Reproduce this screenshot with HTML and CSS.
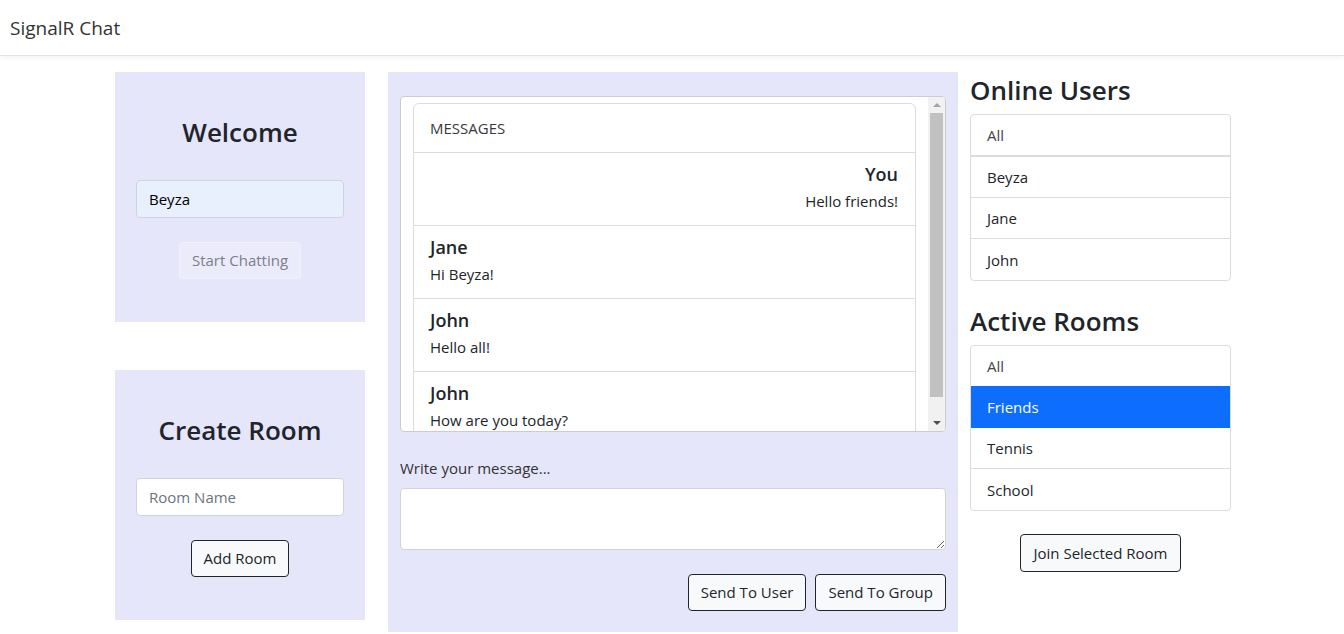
FILE: index.html
```html
<!DOCTYPE html>
<html lang="en">
<head>
<meta charset="utf-8">
<title>SignalR Chat</title>
<link rel="stylesheet" href="styles.css">
</head>
<body>
<nav class="navbar"><span class="brand">SignalR Chat</span></nav>
<main class="layout">
  <div class="left-col">
    <section class="panel">
      <h3 class="panel-title">Welcome</h3>
      <input class="field field-filled" type="text" value="Beyza">
      <button class="btn btn-disabled" disabled>Start Chatting</button>
    </section>
    <section class="panel">
      <h3 class="panel-title">Create Room</h3>
      <input class="field" type="text" placeholder="Room Name">
      <button class="btn">Add Room</button>
    </section>
  </div>

  <section class="chat">
    <div class="scroll-box">
      <div class="scroll-content">
        <div class="card">
          <div class="card-header">MESSAGES</div>
          <div class="msg msg-own">
            <div class="msg-name">You</div>
            <div class="msg-text">Hello friends!</div>
          </div>
          <div class="msg">
            <div class="msg-name">Jane</div>
            <div class="msg-text">Hi Beyza!</div>
          </div>
          <div class="msg">
            <div class="msg-name">John</div>
            <div class="msg-text">Hello all!</div>
          </div>
          <div class="msg">
            <div class="msg-name">John</div>
            <div class="msg-text">How are you today?</div>
          </div>
        </div>
      </div>
      <div class="scrollbar" aria-hidden="true">
        <div class="sb-arrow"><span class="tri-up"></span></div>
        <div class="sb-thumb"></div>
        <div class="sb-rest"></div>
        <div class="sb-arrow"><span class="tri-down"></span></div>
      </div>
    </div>
    <label class="write-label">Write your message...</label>
    <textarea class="message-input"></textarea>
    <div class="actions">
      <button class="btn">Send To User</button>
      <button class="btn">Send To Group</button>
    </div>
  </section>

  <div class="right-col">
    <h3 class="side-title">Online Users</h3>
    <ul class="list">
      <li class="list-item list-item-all">All</li>
      <li class="list-item">Beyza</li>
      <li class="list-item">Jane</li>
      <li class="list-item">John</li>
    </ul>
    <h3 class="side-title side-title-rooms">Active Rooms</h3>
    <ul class="list">
      <li class="list-item list-item-muted">All</li>
      <li class="list-item list-item-active">Friends</li>
      <li class="list-item">Tennis</li>
      <li class="list-item">School</li>
    </ul>
    <div class="join-wrap"><button class="btn">Join Selected Room</button></div>
  </div>
</main>
</body>
</html>
```

FILE: styles.css
```css
* { box-sizing: border-box; }

body {
  margin: 0;
  font-family: "Open Sans", "Noto Sans", sans-serif;
  font-size: 15px;
  color: #212529;
  background: #fff;
}

.navbar {
  height: 56px;
  display: flex;
  align-items: center;
  padding-left: 10px;
  border-bottom: 1px solid #e3e3e3;
  box-shadow: 0 2px 6px rgba(0, 0, 0, 0.05);
}

.brand {
  font-size: 19px;
  color: #333;
}

.layout {
  width: 1114px;
  margin: 16px auto 0;
  display: flex;
  align-items: flex-start;
}

.left-col {
  flex: none;
  width: 250px;
  display: flex;
  flex-direction: column;
  gap: 48px;
}

.panel {
  background: #e6e6fa;
  height: 250px;
  padding: 43px 21px 0;
  text-align: center;
}

.panel-title {
  margin: 0 0 31px;
  font-size: 26px;
  font-weight: 600;
  line-height: 34px;
}

.field {
  display: block;
  width: 100%;
  height: 38px;
  margin-bottom: 24px;
  padding: 6px 12px;
  font: inherit;
  color: #212529;
  background: #fff;
  border: 1px solid #ced4da;
  border-radius: 4px;
  outline: none;
}

.field::placeholder { color: #6c757d; }

.field-filled { background: #e8f0fe; color: #000; }

.btn {
  font: inherit;
  color: #212529;
  background: #f8f9fa;
  border: 1px solid #212529;
  border-radius: 4px;
  padding: 0 12px;
  height: 37px;
  line-height: 35px;
}

.btn-disabled {
  color: #7d7e8c;
  background: #ebebfa;
  border-color: #f2f2fc;
}

.chat {
  flex: none;
  width: 570px;
  margin-left: 23px;
  background: #e6e6fa;
  height: 560px;
  padding: 24px 12px 0;
}

.scroll-box {
  height: 336px;
  display: flex;
  background: #fff;
  border: 1px solid #ccc;
  border-radius: 4px;
  overflow: hidden;
}

.scroll-content {
  flex: 1;
  overflow: hidden;
  padding: 6px 12px 0 12px;
}

.scrollbar {
  width: 17px;
  background: #f1f1f1;
  display: flex;
  flex-direction: column;
}

.sb-arrow {
  height: 16px;
  display: flex;
  align-items: center;
  justify-content: center;
}

.tri-up {
  width: 0;
  height: 0;
  border-left: 4px solid transparent;
  border-right: 4px solid transparent;
  border-bottom: 4px solid #a3a3a3;
}

.tri-down {
  width: 0;
  height: 0;
  border-left: 4px solid transparent;
  border-right: 4px solid transparent;
  border-top: 4px solid #505050;
}

.sb-thumb {
  height: 284px;
  margin: 0 2px;
  background: #c1c1c1;
}

.sb-rest { flex: 1; }

.card {
  border: 1px solid #dcdcdc;
  border-radius: 6px;
  margin-bottom: 7px;
}

.card-header {
  height: 49px;
  padding: 0 16px;
  display: flex;
  align-items: center;
  border-bottom: 1px solid #dcdcdc;
  color: #3a3a3a;
  font-size: 15px;
}

.msg {
  height: 73px;
  padding: 9px 16px 0;
  border-bottom: 1px solid #dcdcdc;
}

.msg:last-child { border-bottom: 0; }

.msg-own { text-align: right; padding-right: 17px; }

.msg-name {
  font-size: 18px;
  font-weight: 600;
  line-height: 24px;
  margin-bottom: 3px;
}

.msg-text { line-height: 24px; }

.write-label {
  display: block;
  margin-top: 24px;
  line-height: 24px;
  color: #333;
}

.message-input {
  display: block;
  width: 100%;
  height: 62px;
  margin-top: 8px;
  border: 1px solid #ced4da;
  border-radius: 4px;
  background: #fff;
  font: inherit;
  resize: vertical;
}

.actions {
  display: flex;
  justify-content: flex-end;
  gap: 9px;
  margin-top: 24px;
}

.right-col {
  flex: none;
  width: 261px;
  margin-left: 12px;
}

.side-title {
  margin: 1px 0 7px;
  font-size: 26px;
  font-weight: 600;
  line-height: 34px;
}

.side-title-rooms { margin-top: 23px; }

.list {
  list-style: none;
  margin: 0;
  padding: 0;
  border: 1px solid #dcdcdc;
  border-radius: 4px;
  overflow: hidden;
}

.list-item {
  height: 41px;
  padding: 0 16px;
  display: flex;
  align-items: center;
  border-bottom: 1px solid #dcdcdc;
}

.list-item:last-child { border-bottom: 0; }

.list-item-all {
  color: #444;
  height: 42px;
  border-bottom: 2px solid #dcdcdc;
}

.list-item-muted { color: #444; }

.list-item-active {
  background: #0d6efd;
  color: #fff;
  border-bottom-color: #0d6efd;
  margin-top: -1px;
  height: 42px;
}

.join-wrap {
  margin-top: 23px;
  display: flex;
  justify-content: center;
}

.join-wrap .btn { height: 38px; }
```
